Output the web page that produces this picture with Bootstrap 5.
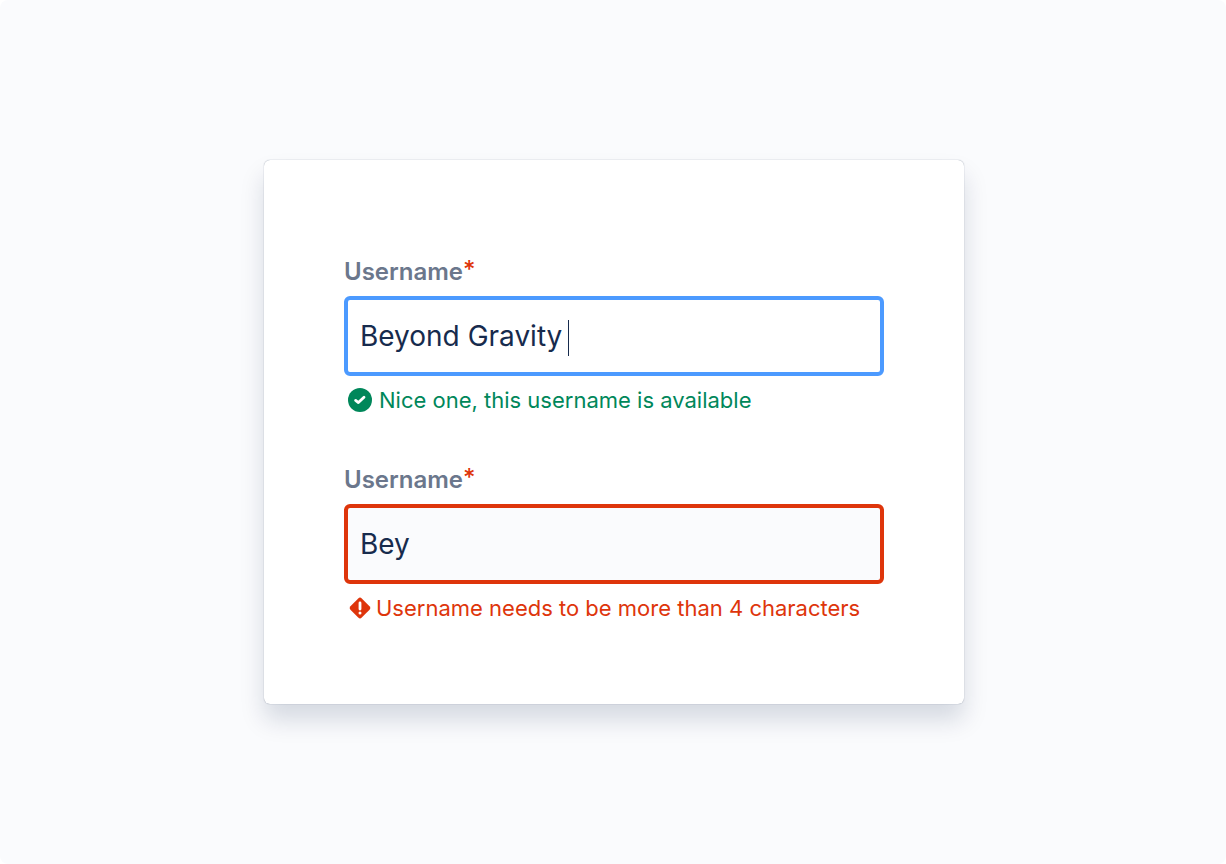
<!DOCTYPE html>
<html lang="en">
<head>
<meta charset="utf-8">
<meta name="viewport" content="width=device-width, initial-scale=1">
<title>Username</title>
<link href="https://cdn.jsdelivr.net/npm/bootstrap@5.3.0/dist/css/bootstrap.min.css" rel="stylesheet">
<style>
  body { font-family: Inter, "Liberation Sans", sans-serif; color: #172b4d; background: #fff; }
  .page-surface { padding-left: 2px; background: #fafbfd; border-radius: 8px; }
  .form-panel {
    width: 100%; max-width: 700px; padding: 96px 80px 80px; border-radius: 6px; background: #fff;
    box-shadow: 0 0 1px rgba(9, 30, 66, .5), 0 16px 24px rgba(9, 30, 66, .15);
  }
  .field-group + .field-group { margin-top: 48px; }
  .field-label { font-size: 24px; line-height: 32px; font-weight: 600; color: #6b778c; }
  .required-mark { color: #de350b; line-height: 1; vertical-align: 2px; font-weight: 500; }
  .field-input, .field-input:focus {
    height: 80px; padding: 0 12px; border: 4px solid #de350b; border-radius: 6px;
    font-size: 28px; color: #172b4d; background: #fafbfd; box-shadow: none;
  }
  .field-input.is-active { border-color: #4c9aff; background: #fff; }
  .caret-line { top: 24px; left: 224px; width: 1px; height: 36px; background: #172b4d; }
  .field-note { font-size: 22px; line-height: 32px; font-weight: 400; padding-left: 4px; }
  .note-ok { color: #00875a; gap: 7px; }
  .note-error { color: #de350b; gap: 4px; }
</style>
</head>
<body>
<main class="page-surface min-vh-100 d-flex align-items-center justify-content-center">
  <form class="form-panel">
    <div class="field-group">
      <label class="field-label d-block mb-2" for="username-ok">Username<span class="required-mark">*</span></label>
      <div class="position-relative">
        <input class="form-control field-input is-active" id="username-ok" type="text" value="Beyond Gravity " aria-describedby="note-ok" required>
        <span class="caret-line position-absolute" aria-hidden="true"></span>
      </div>
      <div class="field-note note-ok d-flex align-items-center mt-2" id="note-ok">
        <svg class="flex-shrink-0" width="24" height="24" viewBox="0 0 24 24" aria-hidden="true">
          <circle cx="12" cy="12" r="12" fill="#00875a"/>
          <path d="M7.6 12.4 10.4 14.6 16 9.2" fill="none" stroke="#fff" stroke-width="2.8" stroke-linecap="round" stroke-linejoin="round"/>
        </svg>
        <span>Nice one, this username is available</span>
      </div>
    </div>
    <div class="field-group">
      <label class="field-label d-block mb-2" for="username-error">Username<span class="required-mark">*</span></label>
      <input class="form-control field-input" id="username-error" type="text" value="Bey" aria-describedby="note-error" aria-invalid="true" required>
      <div class="field-note note-error d-flex align-items-center mt-2" id="note-error">
        <svg class="flex-shrink-0" width="24" height="24" viewBox="0 0 24 24" aria-hidden="true">
          <rect x="4" y="4" width="16" height="16" rx="2.5" fill="#de350b" transform="rotate(45 12 12)"/>
          <path d="M12 7V13" stroke="#fff" stroke-width="2.8" stroke-linecap="round"/>
          <circle cx="12" cy="17" r="1.5" fill="#fff"/>
        </svg>
        <span>Username needs to be more than 4 characters</span>
      </div>
    </div>
  </form>
</main>
<script src="https://cdn.jsdelivr.net/npm/bootstrap@5.3.0/dist/js/bootstrap.bundle.min.js"></script>
</body>
</html>
